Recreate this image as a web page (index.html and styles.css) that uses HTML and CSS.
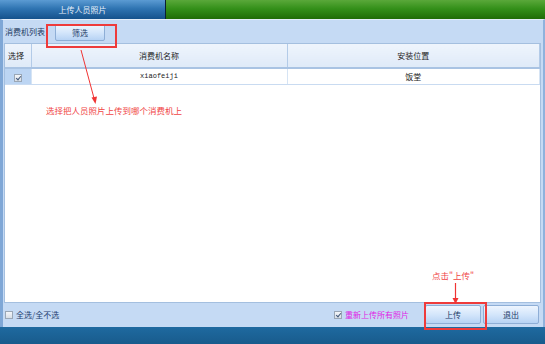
FILE: index.html
```html
<!DOCTYPE html>
<html lang="zh-CN">
<head>
    <meta charset="UTF-8">
    <title>上传人员照片</title>
    <link rel="stylesheet" href="styles.css">
</head>
<body>
    <div class="window">
        <div class="tabs">
            <div class="tab-active">上传人员照片</div>
            <div class="tab-rest"></div>
        </div>

        <div class="panel">
            <div class="toolbar">
                <span class="toolbar-label">消费机列表</span>
                <button type="button" class="btn btn-filter">筛选</button>
            </div>

            <div class="grid">
                <table>
                    <thead>
                        <tr>
                            <th class="col-check">选择</th>
                            <th class="col-name">消费机名称</th>
                            <th class="col-place">安装位置</th>
                        </tr>
                    </thead>
                    <tbody>
                        <tr>
                            <td class="col-check cell-check"><span class="box checked"></span></td>
                            <td class="col-name mono">xiaofeiji</td>
                            <td class="col-place">饭堂</td>
                        </tr>
                    </tbody>
                </table>
            </div>

            <div class="footer">
                <label class="check-all"><span class="box"></span>全选/全不选</label>
                <label class="check-reupload"><span class="box checked"></span>重新上传所有照片</label>
                <button type="button" class="btn btn-action">上传</button>
                <button type="button" class="btn btn-action">退出</button>
            </div>
        </div>

        <div class="statusbar"></div>

        <!-- annotations drawn over the screenshot -->
        <div class="mark mark-filter"></div>
        <div class="mark mark-upload"></div>
        <div class="note note-select">选择把人员照片上传到哪个消费机上</div>
        <div class="note note-upload">点击"上传"</div>
        <svg class="arrows" width="545" height="344" viewBox="0 0 545 344">
            <line x1="81" y1="50" x2="94.5" y2="100" stroke="#f03434" stroke-width="1"/>
            <path d="M91.5 97.5 L95.5 104 L97 96.5 Z" fill="#f03434"/>
            <line x1="455.5" y1="283" x2="455.5" y2="300" stroke="#f03434" stroke-width="1.2"/>
            <path d="M452.5 298 L455.5 304 L458.5 298 Z" fill="#f03434"/>
        </svg>
    </div>
</body>
</html>
```

FILE: styles.css
```css
/* General Reset */
* {
    margin: 0;
    padding: 0;
    box-sizing: border-box;
}

body {
    font-family: 'Noto Sans CJK SC', 'Noto Sans', sans-serif;
    font-size: 8px;
    background: #c5daf4;
    overflow: hidden;
}

.window {
    position: relative;
    width: 545px;
    height: 344px;
    display: flex;
    flex-direction: column;
}

/* Tab strip */
.tabs {
    height: 19px;
    display: flex;
}

.tab-active {
    width: 166px;
    color: #e8f0fa;
    text-align: center;
    line-height: 19px;
    background: linear-gradient(to bottom, #5b9bd3, #2f74b2 45%, #15528c);
    border-right: 1px solid #0a1f33;
}

.tab-rest {
    flex: 1;
    background: linear-gradient(to bottom, #5aa83a, #34901a 45%, #1f6c06);
}

/* Main panel */
.panel {
    flex: 1;
    display: flex;
    flex-direction: column;
    background: #c5daf4;
    border-top: 1px solid #e3edf9;
    border-left: 3px solid #7fa7d6;
    border-right: 2px solid #8fb2dc;
    padding: 0 2px 0 1px;
}

.toolbar {
    height: 23px;
    display: flex;
    align-items: center;
    gap: 10px;
    padding-left: 1px;
    color: #1f3a62;
}

.btn {
    font-family: inherit;
    font-size: 8px;
    color: #1b3a66;
    background: linear-gradient(to bottom, #eef5fe, #d4e6fb 50%, #b7d3f4);
    border: 1px solid #8eaed6;
    border-radius: 2px;
    cursor: pointer;
}

.btn-filter {
    width: 50px;
    height: 17px;
    margin-top: 1px;
}

/* Device grid */
.grid {
    flex: 1;
    background: white;
    border: 1px solid #a4bfdf;
}

.grid table {
    width: 100%;
    border-collapse: collapse;
    table-layout: fixed;
}

.grid th {
    height: 24px;
    font-weight: normal;
    color: #1c1c1c;
    background: linear-gradient(to bottom, #eef4fc, #dfeaf8);
    border-right: 1px solid #b3cbe8;
    border-bottom: 2px solid #a9c3e3;
}

.grid td {
    height: 16px;
    text-align: center;
    color: #222;
    border-right: 1px solid #d6e4f4;
    border-bottom: 1px solid #c9dbf1;
}

.col-check {
    width: 26px;
}

.col-name {
    width: 256px;
}

.grid th.col-check {
    text-align: left;
    padding-left: 3px;
}

.cell-check {
    background: #bcd5f3;
}

.mono {
    font-family: 'Liberation Mono', monospace;
    font-size: 7px;
}

.box {
    display: inline-block;
    width: 8px;
    height: 8px;
    border: 1px solid #9aa7b6;
    background: linear-gradient(to bottom, #f4f6f9, #d8dee6);
    vertical-align: middle;
    position: relative;
}

.box.checked::after {
    content: '';
    position: absolute;
    left: 2px;
    top: 0;
    width: 2px;
    height: 4px;
    border-right: 1px solid #445a7a;
    border-bottom: 1px solid #445a7a;
    transform: rotate(40deg);
}

/* Footer row */
.footer {
    height: 24px;
    display: flex;
    align-items: center;
    padding: 0 0 1px 1px;
}

.footer label {
    display: flex;
    align-items: center;
    gap: 3px;
}

.check-all {
    color: #1d3d70;
}

.check-reupload {
    margin-left: auto;
    margin-right: 16px;
    color: #e01ce6;
}

.btn-action {
    width: 56px;
    height: 19px;
    margin-right: 2px;
}

.statusbar {
    height: 17px;
    background: linear-gradient(to bottom, #1f6aa0, #185b8c);
}

/* Annotation overlay */
.mark {
    position: absolute;
    border: 2px solid #ee3b3b;
}

.mark-filter {
    left: 46px;
    top: 24px;
    width: 71px;
    height: 24px;
}

.mark-upload {
    left: 424px;
    top: 302px;
    width: 63px;
    height: 28px;
}

.note {
    position: absolute;
    color: #f04545;
    font-size: 8.5px;
    white-space: nowrap;
}

.note-select {
    left: 46px;
    top: 104px;
}

.note-upload {
    left: 432px;
    top: 269px;
}

.arrows {
    position: absolute;
    left: 0;
    top: 0;
    pointer-events: none;
}
```
